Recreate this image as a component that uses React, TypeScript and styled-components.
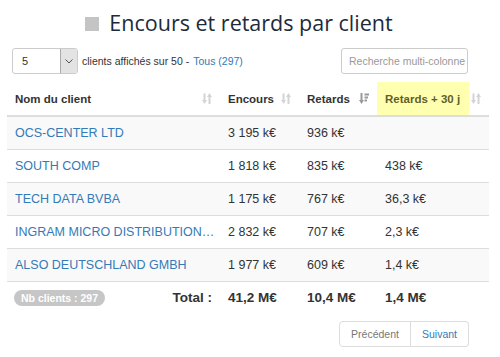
import React from "react";
import styled, { createGlobalStyle } from "styled-components";

const GlobalStyle = createGlobalStyle`
  html, body {
    margin: 0;
    padding: 0;
    background: #ffffff;
    font-family: "Liberation Sans", Arial, sans-serif;
    color: #333333;
  }
`;

const Page = styled.div`
  width: 500px;
  height: 357px;
  padding: 0 11px 0 7px;
  box-sizing: border-box;
  overflow: hidden;
`;

const Title = styled.h1`
  margin: 0;
  padding: 0 18px 0 0;
  height: 45px;
  box-sizing: border-box;
  display: flex;
  align-items: center;
  justify-content: center;
  gap: 10px;
  font-family: "Open Sans", sans-serif;
  font-size: 21.5px;
  font-weight: 400;
  color: #1b2b3c;
`;

const Square = styled.span`
  width: 14px;
  height: 14px;
  margin-top: 2px;
  background: #c4c4c4;
`;

const Controls = styled.div`
  display: flex;
  align-items: center;
  justify-content: space-between;
  height: 26px;
  margin: 3px 21px 0 5px;
`;

const LengthBox = styled.div`
  display: flex;
  align-items: center;
  gap: 4px;
  font-size: 10.5px;
`;

const Select = styled.div`
  display: flex;
  width: 66px;
  height: 26px;
  box-sizing: border-box;
  border: 1px solid #cccccc;
  border-radius: 3px;
  overflow: hidden;
  font-size: 11px;
`;

const SelectValue = styled.span`
  flex: 1;
  display: flex;
  align-items: center;
  padding-left: 9px;
`;

const SelectArrow = styled.span`
  width: 16px;
  display: flex;
  align-items: center;
  justify-content: center;
  background: #e3e3e3;
  border-left: 1px solid #aaaaaa;
`;

const Link = styled.span`
  color: #337ab7;
`;

const Search = styled.div`
  width: 127px;
  height: 26px;
  box-sizing: border-box;
  border: 1px solid #cccccc;
  border-radius: 3px;
  padding: 0 7px;
  display: flex;
  align-items: center;
  font-size: 10.5px;
  color: #999999;
  white-space: nowrap;
  overflow: hidden;
`;

const Table = styled.table`
  width: 482px;
  margin-top: 8px;
  border-collapse: collapse;
  table-layout: fixed;
`;

const Th = styled.th`
  height: 33px;
  padding: 0 8px;
  box-sizing: border-box;
  text-align: left;
  font-size: 11.5px;
  font-weight: 700;
  color: #333333;
  border-bottom: 2px solid #dddddd;
  white-space: nowrap;
`;

const HeadInner = styled.div`
  display: flex;
  align-items: center;
  justify-content: space-between;
`;

const Highlight = styled.span`
  display: flex;
  align-items: center;
  width: 92px;
  height: 33px;
  margin-left: -8px;
  padding-left: 8px;
  box-sizing: border-box;
  background: #ffffb0;
  color: #5f5f2a;
`;

const Tr = styled.tr<{ $striped?: boolean }>`
  background: ${(p) => (p.$striped ? "#f9f9f9" : "#ffffff")};
`;

const Td = styled.td`
  height: 33px;
  padding: 0 8px;
  box-sizing: border-box;
  font-size: 12.5px;
  border-bottom: 1px solid #dddddd;
  white-space: nowrap;
  overflow: hidden;
  text-overflow: ellipsis;
`;

const NameTd = styled(Td)`
  color: #337ab7;
  padding-right: 3px;
`;

const FootTd = styled.td<{ $right?: boolean }>`
  height: 33px;
  padding: 0 8px;
  box-sizing: border-box;
  font-size: 13.5px;
  font-weight: 700;
  text-align: ${(p) => (p.$right ? "right" : "left")};
  white-space: nowrap;
`;

const FootName = styled.div`
  display: flex;
  align-items: center;
  justify-content: space-between;
`;

const Badge = styled.span`
  display: inline-block;
  padding: 2px 7px;
  margin-left: -1px;
  border-radius: 8px;
  background: #c6c6c6;
  color: #ffffff;
  font-size: 10.5px;
  font-weight: 700;
`;

const Pager = styled.div`
  display: flex;
  justify-content: flex-end;
  margin: 7px 20px 0 0;
`;

const PageButton = styled.span<{ $active?: boolean }>`
  height: 26px;
  box-sizing: border-box;
  padding: 0 11px;
  display: flex;
  align-items: center;
  font-size: 10.5px;
  border: 1px solid #dddddd;
  color: ${(p) => (p.$active ? "#337ab7" : "#777777")};
  &:first-child {
    border-radius: 4px 0 0 4px;
  }
  & + & {
    border-left: none;
    border-radius: 0 4px 4px 0;
  }
`;

const SortIcon = ({ dark }: { dark?: boolean }) =>
  dark ? (
    <svg width="10" height="12" viewBox="0 0 10 12">
      <g fill="#9a9a9a">
        <rect x="1.5" y="0" width="2" height="8" />
        <polygon points="0,7 5,7 2.5,11" />
        <rect x="5.5" y="0.5" width="4.5" height="2" />
        <rect x="5.5" y="3.5" width="3.5" height="2" />
        <rect x="5.5" y="6.5" width="2.5" height="2" />
      </g>
    </svg>
  ) : (
    <svg width="10" height="12" viewBox="0 0 10 12">
      <g fill="#d4d4d4">
        <rect x="1.5" y="0.5" width="2" height="7.5" />
        <polygon points="0,7 5,7 2.5,11" />
        <rect x="6.5" y="3" width="2" height="8" />
        <polygon points="5,4 10,4 7.5,0" />
      </g>
    </svg>
  );

const Chevron = () => (
  <svg width="8" height="5" viewBox="0 0 8 5">
    <polyline points="0.5,0.5 4,4 7.5,0.5" fill="none" stroke="#555" strokeWidth="1" />
  </svg>
);

const rows = [
  { name: "OCS-CENTER LTD", encours: "3 195 k€", retards: "936 k€", r30: "" },
  { name: "SOUTH COMP", encours: "1 818 k€", retards: "835 k€", r30: "438 k€" },
  { name: "TECH DATA BVBA", encours: "1 175 k€", retards: "767 k€", r30: "36,3 k€" },
  { name: "INGRAM MICRO DISTRIBUTION GMBH", encours: "2 832 k€", retards: "707 k€", r30: "2,3 k€" },
  { name: "ALSO DEUTSCHLAND GMBH", encours: "1 977 k€", retards: "609 k€", r30: "1,4 k€" },
];

export default function App() {
  return (
    <>
      <GlobalStyle />
      <Page>
        <Title>
          <Square />
          Encours et retards par client
        </Title>
        <Controls>
          <LengthBox>
            <Select>
              <SelectValue>5</SelectValue>
              <SelectArrow>
                <Chevron />
              </SelectArrow>
            </Select>
            clients affichés sur 50 - <Link>Tous (297)</Link>
          </LengthBox>
          <Search>Recherche multi-colonne</Search>
        </Controls>
        <Table>
          <colgroup>
            <col style={{ width: 213 }} />
            <col style={{ width: 79 }} />
            <col style={{ width: 78 }} />
            <col style={{ width: 112 }} />
          </colgroup>
          <thead>
            <tr>
              <Th>
                <HeadInner>
                  Nom du client <SortIcon />
                </HeadInner>
              </Th>
              <Th>
                <HeadInner>
                  Encours <SortIcon />
                </HeadInner>
              </Th>
              <Th>
                <HeadInner>
                  Retards <SortIcon dark />
                </HeadInner>
              </Th>
              <Th>
                <HeadInner>
                  <Highlight>Retards + 30 j</Highlight>
                  <SortIcon />
                </HeadInner>
              </Th>
            </tr>
          </thead>
          <tbody>
            {rows.map((r, i) => (
              <Tr key={r.name} $striped={i % 2 === 0}>
                <NameTd>{r.name}</NameTd>
                <Td>{r.encours}</Td>
                <Td>{r.retards}</Td>
                <Td>{r.r30}</Td>
              </Tr>
            ))}
          </tbody>
          <tfoot>
            <tr>
              <FootTd>
                <FootName>
                  <Badge>Nb clients : 297</Badge>
                  <span>Total :</span>
                </FootName>
              </FootTd>
              <FootTd>41,2 M€</FootTd>
              <FootTd>10,4 M€</FootTd>
              <FootTd>1,4 M€</FootTd>
            </tr>
          </tfoot>
        </Table>
        <Pager>
          <PageButton>Précédent</PageButton>
          <PageButton $active>Suivant</PageButton>
        </Pager>
      </Page>
    </>
  );
}
